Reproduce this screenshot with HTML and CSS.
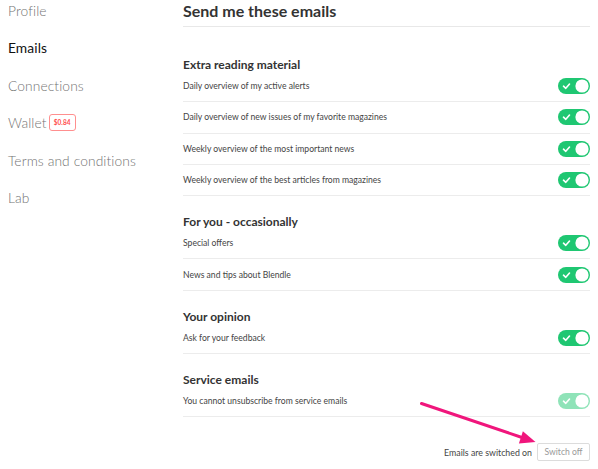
FILE: index.html
```html
<!DOCTYPE html>
<html>
<head>
<meta charset="utf-8">
<link rel="stylesheet" href="styles.css">
</head>
<body>
<div class="page">
  <nav class="sidebar">
    <a class="nav-item">Profile</a>
    <a class="nav-item active">Emails</a>
    <a class="nav-item">Connections</a>
    <a class="nav-item">Wallet <span class="badge">$0.84</span></a>
    <a class="nav-item">Terms and conditions</a>
    <a class="nav-item">Lab</a>
  </nav>
  <main class="main">
    <h1 class="title">Send me these emails</h1>

    <section class="section first">
      <h2 class="section-title">Extra reading material</h2>
      <div class="row"><span>Daily overview of my active alerts</span><svg class="toggle" viewBox="0 0 32 16"><rect width="32" height="16" rx="8" class="track"/><path d="M5.5 8.2 L7.8 10.3 L11.5 6" class="check"/><circle cx="24" cy="8" r="6.6" class="knob"/></svg></div>
      <div class="row"><span>Daily overview of new issues of my favorite magazines</span><svg class="toggle" viewBox="0 0 32 16"><rect width="32" height="16" rx="8" class="track"/><path d="M5.5 8.2 L7.8 10.3 L11.5 6" class="check"/><circle cx="24" cy="8" r="6.6" class="knob"/></svg></div>
      <div class="row"><span>Weekly overview of the most important news</span><svg class="toggle" viewBox="0 0 32 16"><rect width="32" height="16" rx="8" class="track"/><path d="M5.5 8.2 L7.8 10.3 L11.5 6" class="check"/><circle cx="24" cy="8" r="6.6" class="knob"/></svg></div>
      <div class="row"><span>Weekly overview of the best articles from magazines</span><svg class="toggle" viewBox="0 0 32 16"><rect width="32" height="16" rx="8" class="track"/><path d="M5.5 8.2 L7.8 10.3 L11.5 6" class="check"/><circle cx="24" cy="8" r="6.6" class="knob"/></svg></div>
    </section>

    <section class="section">
      <h2 class="section-title">For you - occasionally</h2>
      <div class="row"><span>Special offers</span><svg class="toggle" viewBox="0 0 32 16"><rect width="32" height="16" rx="8" class="track"/><path d="M5.5 8.2 L7.8 10.3 L11.5 6" class="check"/><circle cx="24" cy="8" r="6.6" class="knob"/></svg></div>
      <div class="row"><span>News and tips about Blendle</span><svg class="toggle" viewBox="0 0 32 16"><rect width="32" height="16" rx="8" class="track"/><path d="M5.5 8.2 L7.8 10.3 L11.5 6" class="check"/><circle cx="24" cy="8" r="6.6" class="knob"/></svg></div>
    </section>

    <section class="section">
      <h2 class="section-title">Your opinion</h2>
      <div class="row"><span>Ask for your feedback</span><svg class="toggle" viewBox="0 0 32 16"><rect width="32" height="16" rx="8" class="track"/><path d="M5.5 8.2 L7.8 10.3 L11.5 6" class="check"/><circle cx="24" cy="8" r="6.6" class="knob"/></svg></div>
    </section>

    <section class="section">
      <h2 class="section-title">Service emails</h2>
      <div class="row"><span>You cannot unsubscribe from service emails</span><svg class="toggle disabled" viewBox="0 0 32 16"><rect width="32" height="16" rx="8" class="track"/><path d="M5.5 8.2 L7.8 10.3 L11.5 6" class="check"/><circle cx="24" cy="8" r="6.6" class="knob"/></svg></div>
    </section>

    <div class="footer">
      <span class="status">Emails are switched on</span>
      <button class="switch-off">Switch off</button>
    </div>
  </main>
</div>
<svg class="arrow" width="598" height="469" viewBox="0 0 598 469">
  <line x1="421.5" y1="403.5" x2="522" y2="437.5" class="arrow-line"/>
  <polygon points="535.5,442 518.9,443.5 522.9,431.3" class="arrow-head"/>
</svg>
</body>
</html>
```

FILE: styles.css
```css
* { box-sizing: border-box; }
html, body { margin: 0; padding: 0; background: #fff; }
body {
  font-family: Lato, "Open Sans", sans-serif;
  width: 598px;
  height: 469px;
  overflow: hidden;
  position: relative;
}
.page {
  display: flex;
}
.sidebar {
  width: 183px;
  padding-left: 8px;
  display: flex;
  flex-direction: column;
}
.nav-item {
  display: flex;
  align-items: center;
  height: 20px;
  margin-bottom: 17.6px;
  font-size: 13.8px;
  font-weight: 300;
  color: #737373;
  letter-spacing: 0.1px;
}
.nav-item.active {
  color: #111;
  font-weight: 400;
}
.badge {
  display: inline-flex;
  align-items: center;
  justify-content: center;
  margin-left: 2px;
  width: 27px;
  height: 17px;
  border: 1px solid #ff8f8f;
  border-radius: 3px;
  color: #ff4d4d;
  font-size: 6.5px;
  font-weight: 700;
  letter-spacing: 0;
}
.main {
  width: 407px;
}
.title {
  margin: 0;
  font-size: 16px;
  line-height: 22px;
  font-weight: 700;
  color: #333;
  padding-bottom: 4px;
  border-bottom: 1px solid #e8e8e8;
}
.section { margin-top: 20px; }
.section.first { margin-top: 32px; }
.section-title {
  margin: 0;
  font-size: 12px;
  line-height: 12px;
  font-weight: 700;
  color: #333;
}
.row {
  height: 31.3px;
  display: flex;
  align-items: center;
  justify-content: space-between;
  border-bottom: 1px solid #ececec;
  font-size: 8.6px;
  color: #444;
}
.toggle {
  width: 32px;
  height: 16px;
  display: block;
}
.track { fill: #1fc772; }
.toggle.disabled .track { fill: #8fe3b8; }
.knob { fill: #fff; }
.check {
  fill: none;
  stroke: #fff;
  stroke-width: 1.6;
  stroke-linecap: round;
  stroke-linejoin: round;
}
.footer {
  margin-top: 26px;
  display: flex;
  justify-content: flex-end;
  align-items: center;
  gap: 5px;
}
.status {
  font-size: 8.8px;
  color: #444;
}
.switch-off {
  width: 53px;
  height: 18px;
  padding: 0;
  border: 1px solid #dcdcdc;
  border-radius: 2px;
  background: #fff;
  font-family: Lato, "Open Sans", sans-serif;
  font-size: 8.6px;
  color: #999;
}
.arrow {
  position: absolute;
  left: 0;
  top: 0;
  pointer-events: none;
}
.arrow-line {
  stroke: #f0167c;
  stroke-width: 3;
  stroke-linecap: round;
}
.arrow-head { fill: #f0167c; }
```
